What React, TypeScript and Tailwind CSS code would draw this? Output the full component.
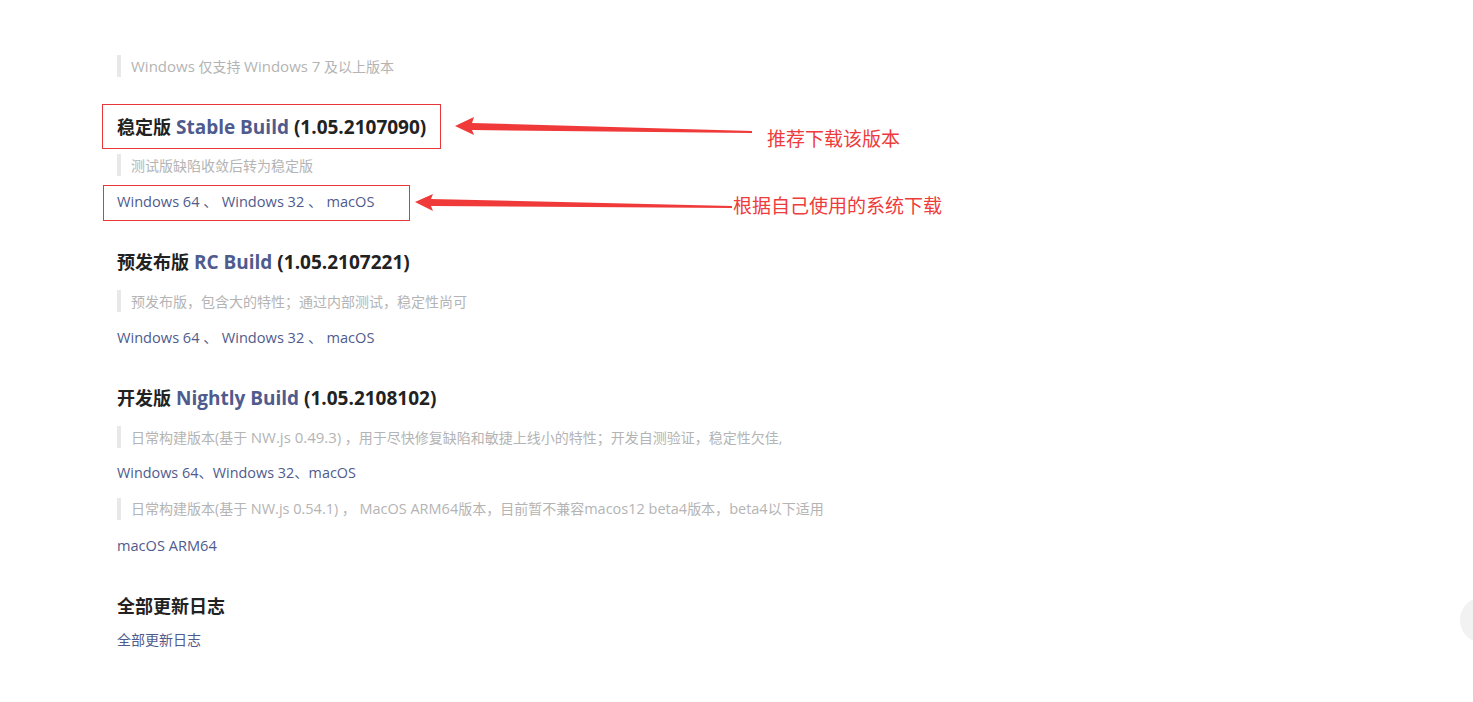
import React from 'react'

const font = { fontFamily: '"Open Sans", "Noto Sans CJK SC", sans-serif' }

// latin runs are a touch larger than the CJK ones, as in the original page font
const L: React.FC<{ children: React.ReactNode; small?: boolean }> = ({ children, small }) => (
  <span className={small ? 'text-[14.5px]' : 'text-[15px]'}>{children}</span>
)

const Quote: React.FC<{ children: React.ReactNode; className?: string }> = ({ children, className }) => (
  <div className={`border-l-4 border-[#e8e8e8] pl-[10px] h-[22px] flex items-center ${className ?? ''}`}>
    <span className="text-[14px] text-[#b4b4b4] whitespace-nowrap">{children}</span>
  </div>
)

const Heading: React.FC<{ zh: string; en?: string; ver?: string; className?: string }> = ({ zh, en, ver, className }) => (
  <h2 className={`text-[18px] font-bold leading-[28px] text-[#222] ${className ?? ''}`}>
    {zh}
    {en && <span className="text-[19px] text-[#4f5b8d]"> {en}</span>}
    {ver && <span className="text-[19px]"> {ver}</span>}
  </h2>
)

const Links: React.FC<{ className?: string }> = ({ className }) => (
  <div className={`text-[14.6px] leading-[24px] text-[#4f5b8d] ${className ?? ''}`}>
    <span>Windows 64</span> 、 <span>Windows 32</span> 、 <span>macOS</span>
  </div>
)

export default function App() {
  return (
    <div className="relative w-[1473px] h-[702px] overflow-hidden bg-white" style={font}>
      <div className="pl-[117px] pt-[55px]">
        <Quote>
          <L>Windows</L> 仅支持 <L>Windows 7</L> 及以上版本
        </Quote>

        <Heading className="mt-[36px]" zh="稳定版" en="Stable Build" ver="(1.05.2107090)" />
        <Quote className="mt-[13px]">测试版缺陷收敛后转为稳定版</Quote>
        <Links className="mt-[13px]" />

        <Heading className="mt-[35px]" zh="预发布版" en="RC Build" ver="(1.05.2107221)" />
        <Quote className="mt-[14px]">预发布版，包含大的特性；通过内部测试，稳定性尚可</Quote>
        <Links className="mt-[13px]" />

        <Heading className="mt-[35px]" zh="开发版" en="Nightly Build" ver="(1.05.2108102)" />
        <Quote className="mt-[14px]">
          日常构建版本(基于 <L>NW.js 0.49.3</L>) ，用于尽快修复缺陷和敏捷上线小的特性；开发自测验证，稳定性欠佳,
        </Quote>
        <div className="mt-[13px] text-[14.4px] leading-[24px] text-[#4f5b8d]">Windows 64、Windows 32、macOS</div>
        <Quote className="mt-[13px]">
          日常构建版本(基于 <L small>NW.js 0.54.1</L>) ， <L small>MacOS ARM64</L>版本，目前暂不兼容<L small>macos12 beta4</L>版本，<L small>beta4</L>以下适用
        </Quote>
        <div className="mt-[13px] text-[14.6px] leading-[24px] text-[#4f5b8d]">macOS ARM64</div>

        <Heading className="mt-[35px]" zh="全部更新日志" />
        <div className="mt-[9px] text-[14px] leading-[22px] text-[#4f5b8d]">全部更新日志</div>
      </div>

      {/* annotation boxes */}
      <div className="absolute left-[102px] top-[104px] w-[339px] h-[45px] border border-[#e8353a]" />
      <div className="absolute left-[103px] top-[185px] w-[307px] h-[36px] border border-[#e8353a]" />

      {/* annotation arrows */}
      <svg className="absolute left-0 top-0" width="1473" height="702">
        <polygon points="455,126 474,117 472,123 752,131 752,133 472,130 474,135" fill="#f03a3a" />
        <polygon points="415,202 433,194 431,199 732,206 732,208 431,206 433,211" fill="#f03a3a" />
      </svg>
      <div className="absolute left-[767px] top-[126px] text-[19px] leading-[26px] text-[#ee3b3b]">推荐下载该版本</div>
      <div className="absolute left-[733px] top-[193px] text-[19px] leading-[26px] text-[#ee3b3b]">根据自己使用的系统下载</div>

      {/* back-to-top button, partly off screen */}
      <div className="absolute left-[1460px] top-[597px] w-[46px] h-[46px] rounded-full bg-[#f2f2f2]" />
    </div>
  )
}
